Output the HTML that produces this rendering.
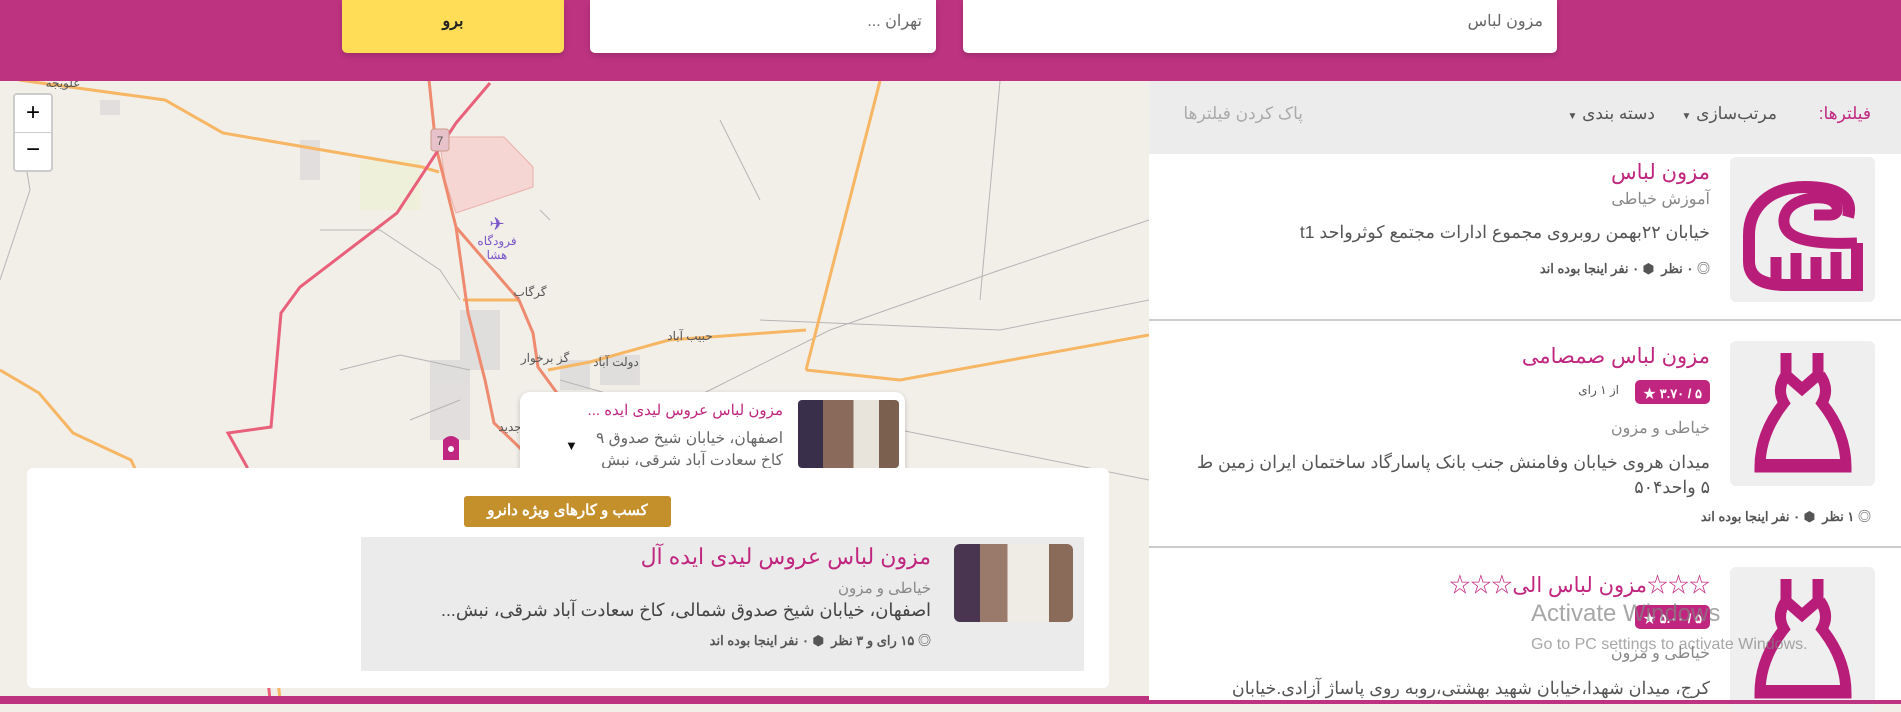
<!DOCTYPE html>
<html><head><meta charset="utf-8">
<style>
*{margin:0;padding:0;box-sizing:border-box}
body{width:1901px;height:704px;overflow:hidden;position:relative;background:#f2efe9;font-family:"Liberation Sans","Noto Sans CJK SC",sans-serif;direction:rtl}
.abs{position:absolute}
#hdr{left:0;top:0;width:1901px;height:81px;background:#bd3380}
.inp{background:#fff;border-radius:0 0 5px 5px;top:0;height:53px;box-shadow:0 3px 6px rgba(0,0,0,.15);color:#666;font-size:16px;padding:11px 14px 0 0}
#map{left:0;top:81px;width:1149px;height:623px;overflow:hidden;background:#f2efe9}
#panel{left:1149px;top:81px;width:752px;height:623px;background:#fff}
#fbar{left:0;top:0;width:752px;height:73px;background:#ececec;font-size:17px;color:#555}
.card .img{position:absolute;left:581px;width:145px;height:145px;background:#efefef;border-radius:6px;overflow:hidden}
.t{position:absolute;right:191px;color:#c0267f;font-size:21px;white-space:nowrap}
.s{position:absolute;right:191px;color:#888;font-size:16px;white-space:nowrap}
.a{position:absolute;right:191px;color:#555;font-size:17.5px;white-space:nowrap}
.m{position:absolute;right:191px;color:#555;font-size:13px;font-weight:bold;white-space:nowrap}
.div{position:absolute;left:0;width:752px;height:2px;background:#ccc}
.rate{position:absolute;background:#c0267f;color:#fff;border-radius:5px;font-size:13px;font-weight:bold;padding:3px 8px;height:24px}
</style></head><body>
<div id="hdr" class="abs">
 <div class="abs" style="left:342px;top:0;width:222px;height:53px;background:#ffdd57;border-radius:0 0 5px 5px;text-align:center;font-size:16px;font-weight:bold;color:#222;padding-top:11px;box-shadow:0 3px 6px rgba(0,0,0,.15)">برو</div>
 <div class="abs inp" style="left:590px;width:346px">تهران ...</div>
 <div class="abs inp" style="left:963px;width:594px">مزون لباس</div>
</div>

<div id="map" class="abs">
<svg width="1149" height="623" viewBox="0 81 1149 623" style="position:absolute;left:0;top:0">
 <polygon points="439,137 504,137 533,167 533,187 456,213 445,180" fill="#f5d6d2" stroke="#eab0aa" stroke-width="1"/>
 <rect x="360" y="160" width="60" height="50" fill="#eef0d5" opacity=".8"/>
 <g fill="#dcdada" opacity=".8">
  <rect x="460" y="310" width="40" height="60"/><rect x="430" y="360" width="40" height="80"/><rect x="560" y="360" width="30" height="30"/><rect x="600" y="355" width="40" height="30"/><rect x="300" y="140" width="20" height="40"/><rect x="100" y="100" width="20" height="15"/>
 </g>
 <g fill="none" stroke="#b5b5b5" stroke-width="1">
  <path d="M0,280 L30,190 L20,130"/><path d="M320,230 L380,230 L440,270 L460,300"/><path d="M340,370 L400,355 L470,370"/><path d="M410,420 L460,400"/><path d="M760,200 L720,120"/><path d="M540,210 L550,220"/>
  <path d="M690,400 L830,330 L1000,270 L1149,220"/><path d="M760,320 L1000,330 L1149,300"/><path d="M560,380 L700,420 L900,430 L1149,480"/><path d="M1000,81 L980,300"/>
 </g>
 <g fill="none" stroke="#f6b663" stroke-width="3">
  <path d="M19,80 L165,100 L223,133 L422,167 L439,172"/>
  <path d="M880,81 L806,370"/>
  <path d="M548,370 L590,362 L669,340 L806,330"/>
  <path d="M463,300 L519,300"/>
  <path d="M0,370 L39,393 L73,433 L131,460 L150,500"/>
  <path d="M1149,335 L900,380 L806,370"/>
  <path d="M270,600 L280,700"/>
 </g>
 <g fill="none" stroke="#ee8a6e" stroke-width="3">
  <path d="M429,80 L436,147 L456,227 L468,313 L485,380 L494,423 L519,447 L540,470"/>
  <path d="M456,227 L519,300 L533,333 L538,367 L557,393"/>
 </g>
 <path d="M490,83 L456,123 L397,213 L300,287 L281,313 L271,427 L228,433 L247,467 L270,700" fill="none" stroke="#e8607a" stroke-width="3"/>
 <rect x="431" y="129" width="18" height="22" rx="3" fill="#e8c2cb" stroke="#c98" stroke-width="1"/>
 <text x="440" y="145" font-size="12" text-anchor="middle" fill="#555" font-family="Liberation Sans">7</text>
 <text x="497" y="230" font-size="18" text-anchor="middle" fill="#7a55c8">✈</text>
 <g font-family="Liberation Sans,Noto Sans CJK SC,sans-serif" font-size="12" fill="#555" text-anchor="middle">
  <text x="497" y="245" fill="#7a55c8">فرودگاه</text><text x="497" y="259" fill="#7a55c8">هشا</text>
  <text x="530" y="296">گرگاب</text><text x="545" y="362">گز برخوار</text><text x="616" y="366">دولت آباد</text><text x="690" y="340">حبیب آباد</text><text x="63" y="87">علویجه</text><text x="510" y="431">جدید</text>
 </g>
 <path d="M443,440 q8,-8 16,0 v20 h-16z" fill="#c0267f"/><circle cx="451" cy="449" r="3" fill="#fff"/>
 <path d="M0,700 L1149,700" stroke="#bd3380" stroke-width="8"/>
</svg>
 <div class="abs" style="left:13px;top:12px;width:40px;height:79px;background:#fff;border:2px solid rgba(0,0,0,.2);border-radius:4px;direction:ltr">
  <div style="height:38px;border-bottom:1px solid #ccc;text-align:center;font-size:24px;line-height:36px;color:#000">+</div>
  <div style="height:37px;text-align:center;font-size:24px;line-height:34px;color:#000">−</div>
 </div>
 <div class="abs" style="left:520px;top:311px;width:385px;height:90px;background:#fff;border-radius:10px;box-shadow:0 2px 6px rgba(0,0,0,.2)">
  <div class="abs" style="left:278px;top:8px;width:101px;height:68px;background:linear-gradient(90deg,#3a2f4a 0 25%,#8a6a5a 25% 55%,#e8e4dc 55% 80%,#7b6050 80%);border-radius:4px"></div>
  <div class="abs" style="right:122px;top:9px;color:#c0267f;font-size:15px;white-space:nowrap">مزون لباس عروس لیدی ایده ...</div>
  <div class="abs" style="right:122px;top:36px;color:#666;font-size:15.5px;white-space:nowrap;line-height:22px;width:196px;overflow:hidden">اصفهان، خیابان شیخ صدوق ۹<br>کاخ سعادت آباد شرقی، نبش</div>
  <div class="abs" style="left:45px;top:46px;font-size:13px;color:#111">▼</div>
 </div>
 <div class="abs" style="left:27px;top:387px;width:1082px;height:220px;background:#fff;border-radius:6px">
  <div class="abs" style="left:437px;top:28px;width:207px;height:31px;background:#c4902b;border-radius:3px;color:#fff;font-size:15px;font-weight:bold;text-align:center;line-height:30px">کسب و کارهای ویژه دانرو</div>
  <div class="abs" style="left:334px;top:69px;width:723px;height:134px;background:#ebebeb">
   <div class="abs" style="left:593px;top:7px;width:119px;height:78px;border-radius:6px;background:linear-gradient(90deg,#4a3550 0 22%,#9a7a6a 22% 45%,#efece6 45% 80%,#8a6a58 80%)"></div>
   <div class="abs" style="right:153px;top:7px;color:#c0267f;font-size:22px;white-space:nowrap">مزون لباس عروس لیدی ایده آل</div>
   <div class="abs" style="right:153px;top:42px;color:#888;font-size:15px;white-space:nowrap">خیاطی و مزون</div>
   <div class="abs" style="right:153px;top:63px;color:#444;font-size:17.8px;white-space:nowrap">اصفهان، خیابان شیخ صدوق شمالی، کاخ سعادت آباد شرقی، نبش...</div>
   <div class="abs" style="right:153px;top:93px;color:#555;font-size:13px;font-weight:bold;white-space:nowrap">◎ ۱۵ رای و ۳ نظر &nbsp;⬢ ۰ نفر اینجا بوده اند</div>
  </div>
 </div>
</div>

<div id="panel" class="abs">
 <div id="fbar" class="abs">
  <div class="abs" style="right:30px;top:23px;color:#c0267f">فیلترها:</div>
  <div class="abs" style="right:124px;top:23px">مرتب‌سازی <span style="font-size:10px">▼</span></div>
  <div class="abs" style="right:246px;top:23px">دسته بندی <span style="font-size:10px">▼</span></div>
  <div class="abs" style="right:598px;top:23px;color:#aaa">پاک کردن فیلترها</div>
 </div>
 <div class="card">
  <div class="img" style="top:76px"><svg width="145" height="145" viewBox="0 0 145 145">
   <path d="M118,60 C124,38 104,30 75,30 C40,30 19,50 19,78 L19,104 C19,122 34,128 56,128 L127,128 L127,86" fill="none" stroke="#b81e79" stroke-width="12"/>
   <path d="M84,58 L100,58 C110,58 110,46 98,42 C82,38 56,44 54,62 C52,82 80,88 127,86" fill="none" stroke="#b81e79" stroke-width="11"/>
   <path d="M46,100 v25 M66,96 v28 M86,100 v25 M106,95 v30" stroke="#b81e79" stroke-width="11"/>
  </svg></div>
  <div class="t" style="top:79px">مزون لباس</div>
  <div class="s" style="top:108px">آموزش خیاطی</div>
  <div class="a" style="top:141px">خیابان ۲۲بهمن روبروی مجموع ادارات مجتمع کوثرواحد t1</div>
  <div class="m" style="top:177px">◎ ۰ نظر &nbsp;⬢ ۰ نفر اینجا بوده اند</div>
  <div class="div" style="top:238px"></div>

  <div class="img" style="top:260px"><svg width="145" height="145" viewBox="0 0 145 145"><path d="M56,12 v22 l16,14 l16,-14 v-22 M56,34 q-10,14 -2,28 q-24,30 -24,64 h86 q0,-34 -24,-64 q8,-14 -2,-28" fill="none" stroke="#b81e79" stroke-width="11"/><rect x="28" y="118" width="90" height="13" fill="#b81e79"/></svg></div>
  <div class="t" style="top:263px">مزون لباس صمصامی</div>
  <div class="rate" style="right:191px;top:299px">۵ / ۳.۷۰ ★</div>
  <div class="abs" style="right:282px;top:302px;font-size:12px;color:#555">از ۱ رای</div>
  <div class="s" style="top:337px">خیاطی و مزون</div>
  <div class="a" style="top:371px">میدان هروی خیابان وفامنش جنب بانک پاسارگاد ساختمان ایران زمین ط</div>
  <div class="a" style="top:396px">۵ واحد۵۰۴</div>
  <div class="m" style="right:30px;top:425px">◎ ۱ نظر &nbsp;⬢ ۰ نفر اینجا بوده اند</div>
  <div class="div" style="top:465px"></div>

  <div class="img" style="top:486px"><svg width="145" height="145" viewBox="0 0 145 145"><path d="M56,12 v22 l16,14 l16,-14 v-22 M56,34 q-10,14 -2,28 q-24,30 -24,64 h86 q0,-34 -24,-64 q8,-14 -2,-28" fill="none" stroke="#b81e79" stroke-width="11"/><rect x="28" y="118" width="90" height="13" fill="#b81e79"/></svg></div>
  <div class="t" style="top:488px">☆☆☆مزون لباس الی☆☆☆</div>
  <div class="rate" style="right:191px;top:524px">۵ / ۵.۰۰ ★</div>
  <div class="s" style="top:562px">خیاطی و مزون</div>
  <div class="a" style="top:597px">کرج، میدان شهدا،خیابان شهید بهشتی،روبه روی پاساژ آزادی.خیابان</div>
 </div>
 <div class="abs" style="left:382px;top:519px;direction:ltr;color:rgba(130,130,130,.7);font-size:24px;white-space:nowrap">Activate Windows</div>
 <div class="abs" style="left:382px;top:555px;direction:ltr;color:rgba(130,130,130,.7);font-size:16px;white-space:nowrap">Go to PC settings to activate Windows.</div>
 <div class="abs" style="left:0;top:619px;width:752px;height:4px;background:#bd3380"></div>
</div>
</body></html>
